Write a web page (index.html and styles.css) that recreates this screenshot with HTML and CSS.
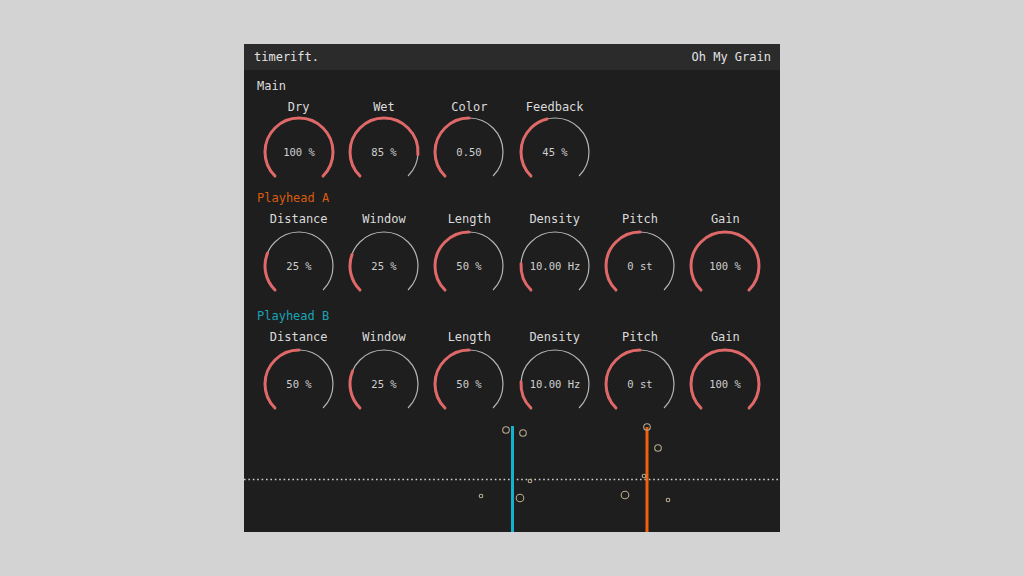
FILE: index.html
```html
<!DOCTYPE html>
<html lang="en">
<head>
<meta charset="utf-8">
<title>timerift. — Oh My Grain</title>
<link rel="stylesheet" href="styles.css">
</head>
<body>
<div class="plugin">
  <header class="topbar">
    <span class="brand">timerift.</span>
    <span class="preset">Oh My Grain</span>
  </header>

  <section class="section section--main">
    <h2 class="section-title">Main</h2>
    <div class="knob-grid">
      <div class="knob"><div class="knob-label">Dry</div>
        <svg class="knob-svg" viewBox="0 0 72 68" width="72" height="68"><path class="track" pathLength="100" d="M11.96 62.04 A34 34 0 1 1 60.04 62.04"/><path class="fill" pathLength="100" style="stroke-dasharray:100 200" d="M11.96 62.04 A34 34 0 1 1 60.04 62.04"/><text class="value" x="36" y="38">100 %</text></svg></div>
      <div class="knob"><div class="knob-label">Wet</div>
        <svg class="knob-svg" viewBox="0 0 72 68" width="72" height="68"><path class="track" pathLength="100" d="M11.96 62.04 A34 34 0 1 1 60.04 62.04"/><path class="fill" pathLength="100" style="stroke-dasharray:85 200" d="M11.96 62.04 A34 34 0 1 1 60.04 62.04"/><text class="value" x="36" y="38">85 %</text></svg></div>
      <div class="knob"><div class="knob-label">Color</div>
        <svg class="knob-svg" viewBox="0 0 72 68" width="72" height="68"><path class="track" pathLength="100" d="M11.96 62.04 A34 34 0 1 1 60.04 62.04"/><path class="fill" pathLength="100" style="stroke-dasharray:50 200" d="M11.96 62.04 A34 34 0 1 1 60.04 62.04"/><text class="value" x="36" y="38">0.50</text></svg></div>
      <div class="knob"><div class="knob-label">Feedback</div>
        <svg class="knob-svg" viewBox="0 0 72 68" width="72" height="68"><path class="track" pathLength="100" d="M11.96 62.04 A34 34 0 1 1 60.04 62.04"/><path class="fill" pathLength="100" style="stroke-dasharray:45 200" d="M11.96 62.04 A34 34 0 1 1 60.04 62.04"/><text class="value" x="36" y="38">45 %</text></svg></div>
    </div>
  </section>

  <section class="section section--a">
    <h2 class="section-title title-a">Playhead A</h2>
    <div class="knob-grid">
      <div class="knob"><div class="knob-label">Distance</div>
        <svg class="knob-svg" viewBox="0 0 72 68" width="72" height="68"><path class="track" pathLength="100" d="M11.96 62.04 A34 34 0 1 1 60.04 62.04"/><path class="fill" pathLength="100" style="stroke-dasharray:25 200" d="M11.96 62.04 A34 34 0 1 1 60.04 62.04"/><text class="value" x="36" y="38">25 %</text></svg></div>
      <div class="knob"><div class="knob-label">Window</div>
        <svg class="knob-svg" viewBox="0 0 72 68" width="72" height="68"><path class="track" pathLength="100" d="M11.96 62.04 A34 34 0 1 1 60.04 62.04"/><path class="fill" pathLength="100" style="stroke-dasharray:24 200" d="M11.96 62.04 A34 34 0 1 1 60.04 62.04"/><text class="value" x="36" y="38">25 %</text></svg></div>
      <div class="knob"><div class="knob-label">Length</div>
        <svg class="knob-svg" viewBox="0 0 72 68" width="72" height="68"><path class="track" pathLength="100" d="M11.96 62.04 A34 34 0 1 1 60.04 62.04"/><path class="fill" pathLength="100" style="stroke-dasharray:50 200" d="M11.96 62.04 A34 34 0 1 1 60.04 62.04"/><text class="value" x="36" y="38">50 %</text></svg></div>
      <div class="knob"><div class="knob-label">Density</div>
        <svg class="knob-svg" viewBox="0 0 72 68" width="72" height="68"><path class="track" pathLength="100" d="M11.96 62.04 A34 34 0 1 1 60.04 62.04"/><path class="fill" pathLength="100" style="stroke-dasharray:18 200" d="M11.96 62.04 A34 34 0 1 1 60.04 62.04"/><text class="value" x="36" y="38">10.00 Hz</text></svg></div>
      <div class="knob"><div class="knob-label">Pitch</div>
        <svg class="knob-svg" viewBox="0 0 72 68" width="72" height="68"><path class="track" pathLength="100" d="M11.96 62.04 A34 34 0 1 1 60.04 62.04"/><path class="fill" pathLength="100" style="stroke-dasharray:50 200" d="M11.96 62.04 A34 34 0 1 1 60.04 62.04"/><text class="value" x="36" y="38">0 st</text></svg></div>
      <div class="knob"><div class="knob-label">Gain</div>
        <svg class="knob-svg" viewBox="0 0 72 68" width="72" height="68"><path class="track" pathLength="100" d="M11.96 62.04 A34 34 0 1 1 60.04 62.04"/><path class="fill" pathLength="100" style="stroke-dasharray:100 200" d="M11.96 62.04 A34 34 0 1 1 60.04 62.04"/><text class="value" x="36" y="38">100 %</text></svg></div>
    </div>
  </section>

  <section class="section section--b">
    <h2 class="section-title title-b">Playhead B</h2>
    <div class="knob-grid">
      <div class="knob"><div class="knob-label">Distance</div>
        <svg class="knob-svg" viewBox="0 0 72 68" width="72" height="68"><path class="track" pathLength="100" d="M11.96 62.04 A34 34 0 1 1 60.04 62.04"/><path class="fill" pathLength="100" style="stroke-dasharray:50 200" d="M11.96 62.04 A34 34 0 1 1 60.04 62.04"/><text class="value" x="36" y="38">50 %</text></svg></div>
      <div class="knob"><div class="knob-label">Window</div>
        <svg class="knob-svg" viewBox="0 0 72 68" width="72" height="68"><path class="track" pathLength="100" d="M11.96 62.04 A34 34 0 1 1 60.04 62.04"/><path class="fill" pathLength="100" style="stroke-dasharray:25 200" d="M11.96 62.04 A34 34 0 1 1 60.04 62.04"/><text class="value" x="36" y="38">25 %</text></svg></div>
      <div class="knob"><div class="knob-label">Length</div>
        <svg class="knob-svg" viewBox="0 0 72 68" width="72" height="68"><path class="track" pathLength="100" d="M11.96 62.04 A34 34 0 1 1 60.04 62.04"/><path class="fill" pathLength="100" style="stroke-dasharray:50 200" d="M11.96 62.04 A34 34 0 1 1 60.04 62.04"/><text class="value" x="36" y="38">50 %</text></svg></div>
      <div class="knob"><div class="knob-label">Density</div>
        <svg class="knob-svg" viewBox="0 0 72 68" width="72" height="68"><path class="track" pathLength="100" d="M11.96 62.04 A34 34 0 1 1 60.04 62.04"/><path class="fill" pathLength="100" style="stroke-dasharray:18 200" d="M11.96 62.04 A34 34 0 1 1 60.04 62.04"/><text class="value" x="36" y="38">10.00 Hz</text></svg></div>
      <div class="knob"><div class="knob-label">Pitch</div>
        <svg class="knob-svg" viewBox="0 0 72 68" width="72" height="68"><path class="track" pathLength="100" d="M11.96 62.04 A34 34 0 1 1 60.04 62.04"/><path class="fill" pathLength="100" style="stroke-dasharray:50 200" d="M11.96 62.04 A34 34 0 1 1 60.04 62.04"/><text class="value" x="36" y="38">0 st</text></svg></div>
      <div class="knob"><div class="knob-label">Gain</div>
        <svg class="knob-svg" viewBox="0 0 72 68" width="72" height="68"><path class="track" pathLength="100" d="M11.96 62.04 A34 34 0 1 1 60.04 62.04"/><path class="fill" pathLength="100" style="stroke-dasharray:100 200" d="M11.96 62.04 A34 34 0 1 1 60.04 62.04"/><text class="value" x="36" y="38">100 %</text></svg></div>
    </div>
  </section>

  <div class="viz">
    <svg class="viz-svg" viewBox="0 0 536 118" width="536" height="118">
      <line class="scrub" x1="0" y1="65.5" x2="536" y2="65.5"/>
      <line class="head head-b" x1="268.5" y1="12" x2="268.5" y2="118"/>
      <line class="head head-a" x1="403" y1="13" x2="403" y2="118"/>
      <circle class="grain" cx="262" cy="16" r="3.3"/>
      <circle class="grain" cx="279" cy="19" r="3.3"/>
      <circle class="grain" cx="286" cy="67" r="1.8"/>
      <circle class="grain" cx="237" cy="82" r="1.8"/>
      <circle class="grain" cx="276" cy="84" r="3.8"/>
      <circle class="grain" cx="403" cy="13" r="3.3"/>
      <circle class="grain" cx="414" cy="34" r="3.3"/>
      <circle class="grain" cx="400" cy="62" r="1.8"/>
      <circle class="grain" cx="381" cy="81" r="3.8"/>
      <circle class="grain" cx="424" cy="86" r="1.8"/>
    </svg>
  </div>
</div>
</body>
</html>
```

FILE: styles.css
```css
html, body {
  margin: 0;
  padding: 0;
}

body {
  background: #d3d3d3;
  height: 100vh;
  display: flex;
  align-items: center;
  justify-content: center;
  font-family: "DejaVu Sans Mono", "Liberation Mono", monospace;
}

.plugin {
  width: 536px;
  height: 488px;
  background: #1e1e1e;
  display: flex;
  flex-direction: column;
  overflow: hidden;
}

.topbar {
  height: 26px;
  background: #2b2b2b;
  display: flex;
  align-items: center;
  justify-content: space-between;
  padding: 0 9px 0 10px;
  color: #e2e2e2;
  font-size: 12px;
}

.section {
  padding: 0 12px;
}

.section--main {
  padding-top: 7px;
  margin-bottom: 7px;
}

.section--a {
  margin-bottom: 11px;
}

.section-title {
  margin: 0 0 4px 1px;
  padding-top: 1px;
  font-size: 12px;
  font-weight: normal;
  line-height: 16px;
  color: #dcdcdc;
}

.title-a {
  color: #d85c0e;
}

.title-b {
  color: #1aa3b5;
}

.knob-grid {
  display: grid;
  grid-template-columns: repeat(6, 1fr);
}

.knob {
  display: flex;
  flex-direction: column;
  align-items: center;
}

.knob-label {
  padding-top: 1px;
  font-size: 12px;
  line-height: 16px;
  color: #dadada;
}

.knob-svg {
  display: block;
  margin-top: 1px;
  overflow: visible;
}

.section--main .knob-svg {
  margin-top: -1px;
}

.track {
  fill: none;
  stroke: #b4b4b4;
  stroke-width: 1.2;
}

.fill {
  fill: none;
  stroke: #df6868;
  stroke-width: 3;
  stroke-linecap: round;
}

.value {
  font-family: "DejaVu Sans Mono", "Liberation Mono", monospace;
  font-size: 10.5px;
  fill: #cfcfcf;
  text-anchor: middle;
  dominant-baseline: central;
}

.viz {
  flex: 1;
  display: flex;
  align-items: flex-end;
}

.viz-svg {
  display: block;
}

.scrub {
  stroke: #cfcfcf;
  stroke-width: 1.6;
  stroke-dasharray: 1.6 2.8;
}

.head {
  stroke-width: 3;
}

.head-b {
  stroke: #13b2cf;
}

.head-a {
  stroke: #f0600e;
}

.grain {
  fill: none;
  stroke: #b9aa8c;
  stroke-width: 1.1;
}
```
